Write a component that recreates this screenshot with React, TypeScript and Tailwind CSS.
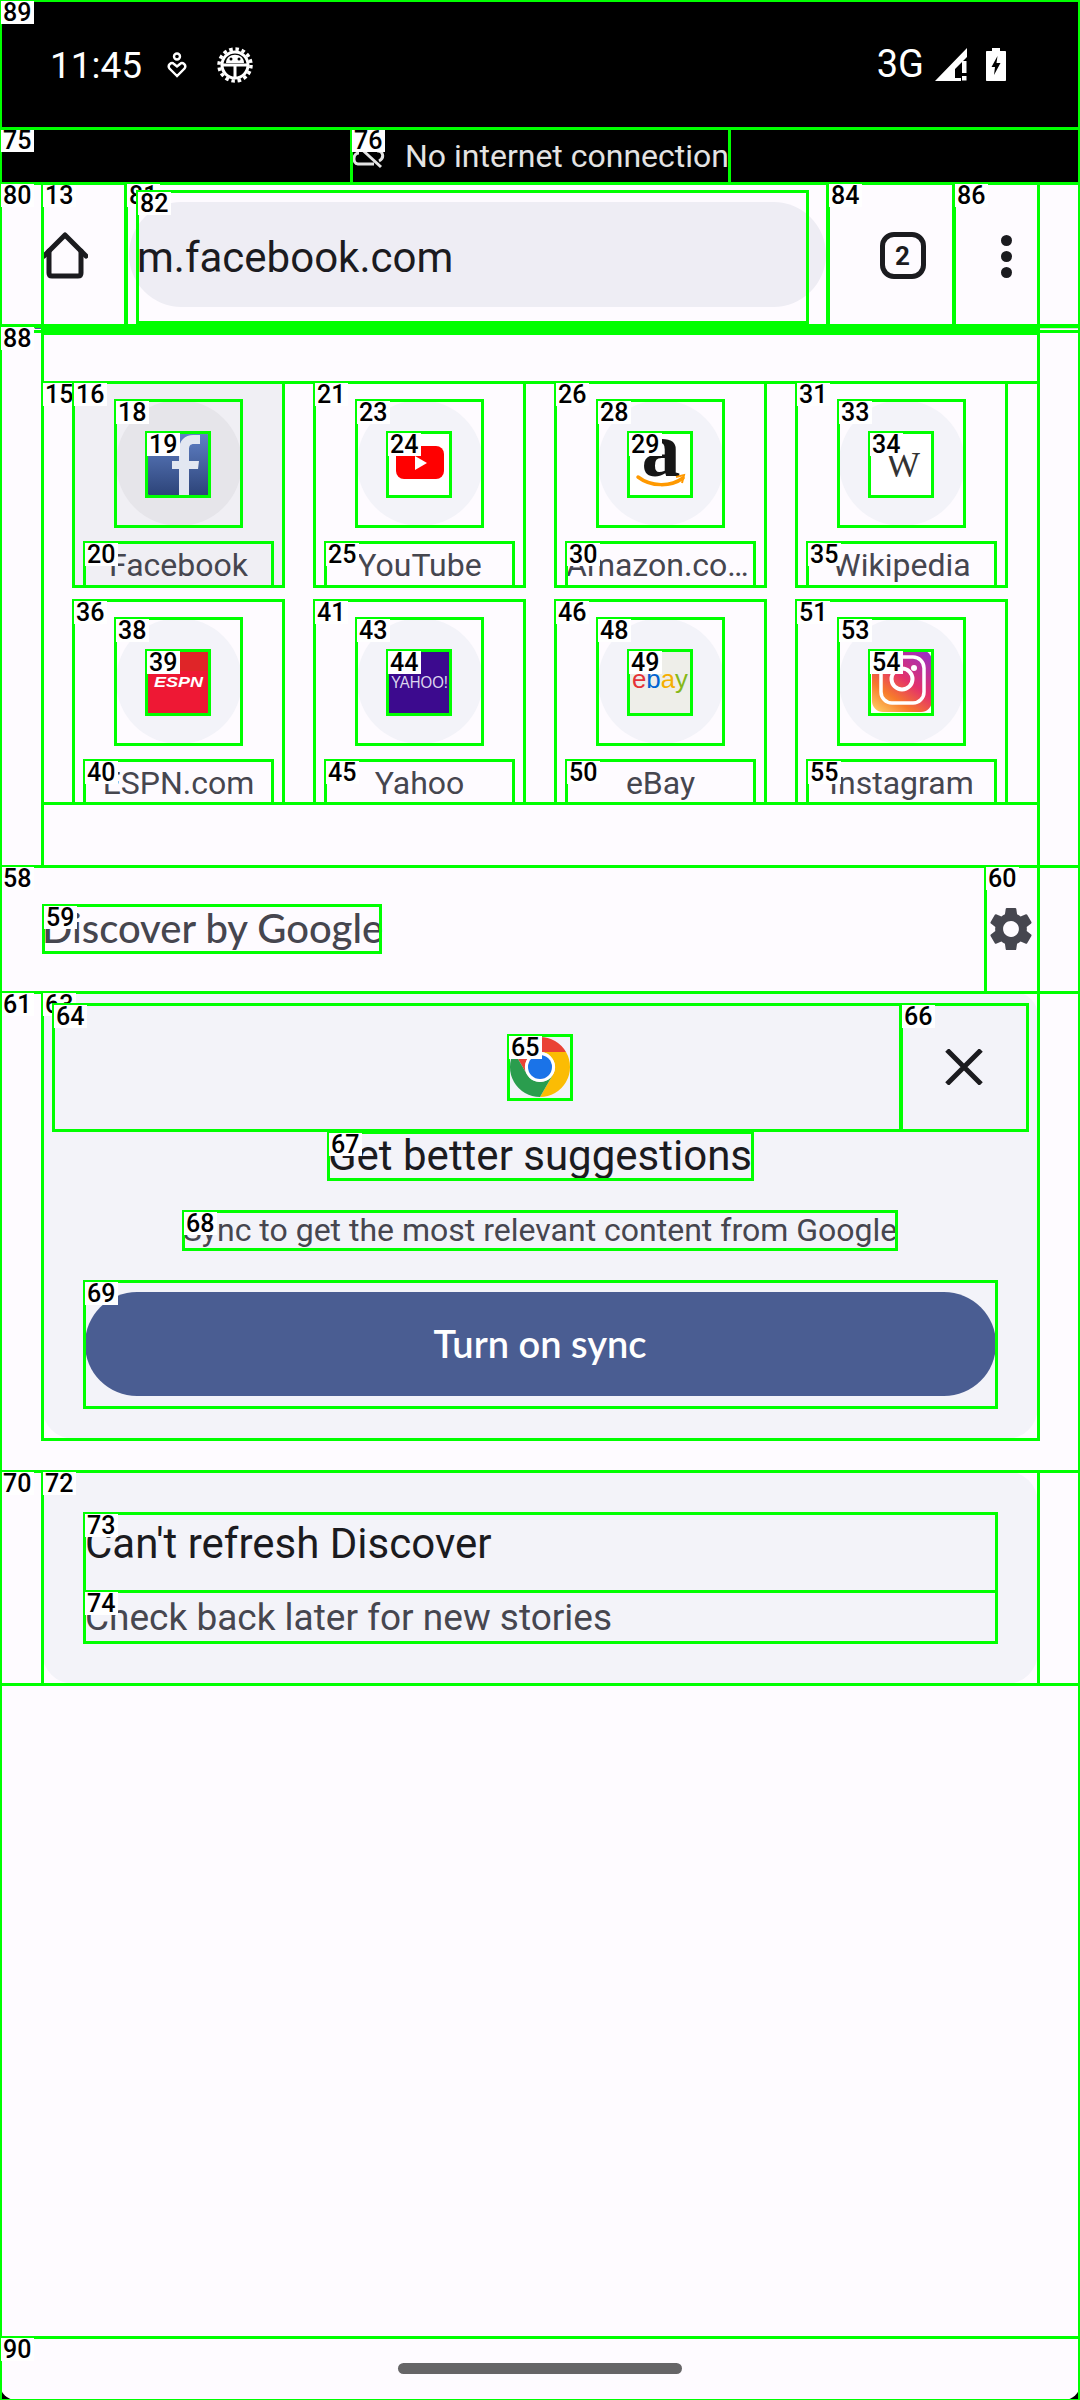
import React from 'react';

type Box = { id: number; x: number; y: number; x2: number; y2: number; label?: boolean };

const sites = [
    { name: 'Facebook', logo: 'facebook' },
    { name: 'YouTube', logo: 'youtube' },
    { name: 'Amazon.com', logo: 'amazon' },
    { name: 'Wikipedia', logo: 'wikipedia' },
    { name: 'ESPN.com', logo: 'espn' },
    { name: 'Yahoo', logo: 'yahoo' },
    { name: 'eBay', logo: 'ebay' },
    { name: 'Instagram', logo: 'instagram' },
];

const Logo = ({ name }: { name: string }) => {
    if (name === 'facebook') {
        return (
            <svg width="64" height="64" viewBox="0 0 64 64">
                <defs>
                    <linearGradient id="fb" x1="0" y1="0" x2="0" y2="1">
                        <stop offset="0" stopColor="#6283c9" />
                        <stop offset="1" stopColor="#2d4479" />
                    </linearGradient>
                </defs>
                <rect width="64" height="64" rx="2" fill="url(#fb)" />
                <path d="M32 64V38H25V30H32V20C32 9 38 4 46 4H53V13H47C43 13 42 15 42 19V30H52L51 38H42V64Z" fill="#e2e7f1" />
            </svg>
        );
    }
    if (name === 'youtube') {
        return (
            <svg width="64" height="64" viewBox="0 0 64 64">
                <rect width="64" height="64" fill="#fff" />
                <rect x="8" y="15" width="48" height="33" rx="8" fill="#f00" />
                <path d="M27 25L39 32L27 39Z" fill="#fff" />
            </svg>
        );
    }
    if (name === 'amazon') {
        return (
            <svg width="64" height="64" viewBox="0 0 64 64">
                <rect width="64" height="64" fill="#fff" />
                <text x="32" y="45" textAnchor="middle" fontFamily="Liberation Serif" fontWeight="700" fontSize="78" fill="#161616">a</text>
                <path d="M9 46C22 56 42 56 54 47" fill="none" stroke="#f90" strokeWidth="3.5" strokeLinecap="round" />
                <path d="M47 46L55 44L53 52" fill="none" stroke="#f90" strokeWidth="2" />
            </svg>
        );
    }
    if (name === 'wikipedia') {
        return (
            <svg width="64" height="64" viewBox="0 0 64 64">
                <rect width="64" height="64" fill="#fff" />
                <text x="33" y="46" textAnchor="middle" fontFamily="Liberation Serif" fontSize="36" fill="#333">W</text>
            </svg>
        );
    }
    if (name === 'espn') {
        return (
            <svg width="64" height="64" viewBox="0 0 64 64">
                <rect width="64" height="64" fill="#ee1834" />
                <rect width="64" height="22" fill="#df2528" />
                <text x="7" y="38" fontFamily="Liberation Sans" fontWeight="700" fontStyle="italic" fontSize="15" textLength="49" lengthAdjust="spacingAndGlyphs" fill="#fff">ESPN</text>
            </svg>
        );
    }
    if (name === 'yahoo') {
        return (
            <svg width="64" height="64" viewBox="0 0 64 64">
                <rect width="64" height="64" fill="#3c0a8e" />
                <text x="3" y="39" fontFamily="Liberation Sans" fontSize="16" textLength="57" lengthAdjust="spacingAndGlyphs" fill="#ddd6ef">YAHOO!</text>
            </svg>
        );
    }
    if (name === 'ebay') {
        return (
            <svg width="64" height="64" viewBox="0 0 64 64">
                <rect width="64" height="64" fill="#eeeee9" />
                <text x="3" y="39" fontFamily="Liberation Sans" fontSize="26" textLength="56" lengthAdjust="spacingAndGlyphs">
                    <tspan fill="#e53238">e</tspan>
                    <tspan fill="#0064d2">b</tspan>
                    <tspan fill="#f5af02">a</tspan>
                    <tspan fill="#86b817">y</tspan>
                </text>
            </svg>
        );
    }
    return (
        <svg width="64" height="64" viewBox="0 0 64 64">
            <defs>
                <linearGradient id="ig" x1="0.15" y1="1" x2="0.85" y2="0">
                    <stop offset="0" stopColor="#fdc35c" />
                    <stop offset="0.25" stopColor="#f77a2c" />
                    <stop offset="0.55" stopColor="#e3316b" />
                    <stop offset="1" stopColor="#9b30c4" />
                </linearGradient>
            </defs>
            <rect width="64" height="64" fill="#fff" />
            <rect x="2" y="1" width="60" height="62" rx="11" fill="url(#ig)" />
            <rect x="11" y="8" width="43" height="46" rx="11" fill="none" stroke="#fff" strokeWidth="3.5" />
            <circle cx="32" cy="30" r="10.5" fill="none" stroke="#fff" strokeWidth="4" />
            <circle cx="44" cy="19" r="3" fill="#fff" />
        </svg>
    );
};

const tileBoxes: Box[] = [0, 1].flatMap((row) =>
    [0, 1, 2, 3].flatMap((col) => {
        const id = 16 + (row * 4 + col) * 5;
        const x = 73 + col * 241;
        const y = row === 0 ? 382 : 600;
        const bottom = row === 0 ? 586 : 803;
        return [
            { id, x, y, x2: x + 211, y2: bottom, label: true },
            { id: id + 2, x: x + 42, y: y + 18, x2: x + 169, y2: y + 144, label: true },
            { id: id + 3, x: x + 73, y: y + 50, x2: x + 137, y2: y + 114, label: true },
            { id: id + 4, x: x + 11, y: y + 160, x2: x + 200, y2: bottom, label: true },
        ];
    })
);

const boxes: Box[] = [
    { id: 1, x: 0, y: 331, x2: 1080, y2: 2337 },
    { id: 2, x: 42, y: 333, x2: 1039, y2: 866 },
    { id: 13, x: 42, y: 183, x2: 126, y2: 328, label: true },
    { id: 15, x: 42, y: 382, x2: 1039, y2: 803, label: true },
    ...tileBoxes,
    { id: 58, x: 0, y: 866, x2: 1080, y2: 992, label: true },
    { id: 59, x: 43, y: 905, x2: 381, y2: 952, label: true },
    { id: 60, x: 985, y: 866, x2: 1039, y2: 992, label: true },
    { id: 61, x: 0, y: 992, x2: 1080, y2: 1471, label: true },
    { id: 63, x: 42, y: 992, x2: 1039, y2: 1439, label: true },
    { id: 64, x: 53, y: 1004, x2: 901, y2: 1130, label: true },
    { id: 65, x: 508, y: 1035, x2: 572, y2: 1099, label: true },
    { id: 66, x: 901, y: 1004, x2: 1028, y2: 1130, label: true },
    { id: 67, x: 328, y: 1132, x2: 753, y2: 1179, label: true },
    { id: 68, x: 183, y: 1211, x2: 897, y2: 1249, label: true },
    { id: 69, x: 84, y: 1281, x2: 997, y2: 1407, label: true },
    { id: 70, x: 0, y: 1471, x2: 1080, y2: 1684, label: true },
    { id: 72, x: 42, y: 1471, x2: 1039, y2: 1684, label: true },
    { id: 73, x: 84, y: 1513, x2: 997, y2: 1591, label: true },
    { id: 74, x: 84, y: 1591, x2: 997, y2: 1642, label: true },
    { id: 75, x: 0, y: 128, x2: 1080, y2: 183, label: true },
    { id: 76, x: 351, y: 128, x2: 730, y2: 183, label: true },
    { id: 80, x: 0, y: 183, x2: 1080, y2: 325, label: true },
    { id: 81, x: 126, y: 183, x2: 828, y2: 328, label: true },
    { id: 82, x: 137, y: 191, x2: 808, y2: 322, label: true },
    { id: 84, x: 828, y: 183, x2: 954, y2: 328, label: true },
    { id: 86, x: 954, y: 183, x2: 1039, y2: 328, label: true },
    { id: 88, x: 0, y: 326, x2: 1080, y2: 2337, label: true },
    { id: 89, x: 0, y: 0, x2: 1080, y2: 128, label: true },
    { id: 90, x: 0, y: 2337, x2: 1080, y2: 2400, label: true },
];

const StatusBar = () => (
    <div className="h-[128px] flex items-center pl-[50px] pr-[74px] text-white">
        <span className="text-[37px] leading-none w-[117px] mt-[3px]">11:45</span>
        <svg width="20" height="26" viewBox="0 0 20 26" fill="none" stroke="#fff" strokeWidth="2.4" className="mt-[2px]">
            <circle cx="10" cy="4.5" r="3" />
            <path d="M10 24L2.5 16.5C0 13 4.5 9.5 7 12L10 14.5L13 12C15.5 9.5 20 13 17.5 16.5Z" />
        </svg>
        <svg className="ml-[30px] mt-[2px]" width="36" height="36" viewBox="0 0 36 36" fill="none">
            <circle cx="18" cy="18" r="16" stroke="#fff" strokeWidth="3.5" strokeDasharray="3.5 2.78" />
            <circle cx="18" cy="18" r="13" stroke="#fff" strokeWidth="3" />
            <path d="M6 18H30M18 18V31" stroke="#fff" strokeWidth="3" />
            <path d="M9 16C9 5 27 5 27 16Z" fill="#fff" />
            <circle cx="14" cy="12" r="1.5" fill="#000" />
            <circle cx="22" cy="12" r="1.5" fill="#000" />
        </svg>
        <span className="ml-auto text-[38px] leading-none mr-[-1px]">3G</span>
        <svg className="ml-[12px]" width="32" height="33" viewBox="0 0 32 33">
            <path d="M0 33L32 0V9L20 21V30H26V33Z" fill="#fff" />
            <rect x="27" y="13" width="4.5" height="12" fill="#fff" />
            <rect x="27" y="28" width="4.5" height="4.5" fill="#fff" />
        </svg>
        <svg className="ml-[19px]" width="20" height="33" viewBox="0 0 20 33">
            <path d="M6 0H14V3H19C19.6 3 20 3.4 20 4V32C20 32.6 19.6 33 19 33H1C0.4 33 0 32.6 0 32V4C0 3.4 0.4 3 1 3H6Z" fill="#fff" />
            <path d="M11.5 8L5.5 19H9L8 27L14.5 15H10.5Z" fill="#000" />
        </svg>
    </div>
);

const Toolbar = () => (
    <div className="h-[144px] flex text-[#1b1b1f]">
        <div className="w-[42px]" />
        <div className="w-[84px] flex items-center pt-[1px]">
            <svg width="46" height="47" viewBox="0 0 46 47" fill="none" stroke="#1b1b1f" strokeWidth="5" strokeLinejoin="round" strokeLinecap="round">
                <path d="M2 24L23 3L44 24" />
                <path d="M7 19V41C7 43 8 44 10 44H36C38 44 39 43 39 41V19" />
            </svg>
        </div>
        <div className="w-[702px] flex items-center pl-[3px] pb-[1px]">
            <div className="w-[697px] h-[105px] rounded-full bg-[#eeedf4] flex items-center pl-[8px] pt-[6px]">
                <span className="text-[42px] leading-none">m.facebook.com</span>
            </div>
        </div>
        <div className="w-[126px] flex items-center justify-center pl-[23px] pt-[1px]">
            <div className="w-[46px] h-[47px] border-[5px] border-[#1b1b1f] rounded-[14px] flex items-center justify-center text-[26px] font-bold leading-none">2</div>
        </div>
        <div className="w-[84px] flex flex-col items-center justify-center gap-[5px] pt-[2px] pl-[20px]">
            <div className="w-[11px] h-[11px] rounded-full bg-[#1b1b1f]" />
            <div className="w-[11px] h-[11px] rounded-full bg-[#1b1b1f]" />
            <div className="w-[11px] h-[11px] rounded-full bg-[#1b1b1f]" />
        </div>
    </div>
);

const TopSites = () => (
    <div className="h-[537px] mx-[42px] pt-[53px]">
        <div className="grid grid-cols-4 gap-x-[30px] gap-y-[14px] pl-[31px] pr-[31px]">
            {sites.map((site, i) => (
                <div key={site.name} className={`h-[204px] flex flex-col items-center pt-[18px] ${i === 0 ? 'bg-[#f0eff4] rounded-[4px]' : ''}`}>
                    <div className={`w-[126px] h-[126px] rounded-full flex items-center justify-center ${i === 0 ? 'bg-[#e6e5ea]' : 'bg-[#f3f3f9]'}`}>
                        <Logo name={site.logo} />
                    </div>
                    <div className="w-[189px] mt-[17px] h-[43px] text-[32px] leading-[44px] text-center text-[#46464f] truncate">{site.name}</div>
                </div>
            ))}
        </div>
    </div>
);

const Chrome = () => (
    <svg width="64" height="64" viewBox="0 0 64 64">
        <path d="M6 17A30 30 0 0 1 58 17H32A15 15 0 0 0 19 39.5Z" fill="#ea4335" />
        <path d="M32 17H58A30 30 0 0 1 32 62L45 39.5A15 15 0 0 0 32 17Z" fill="#fbbc04" />
        <path d="M6 17L19 39.5A15 15 0 0 0 45 39.5L32 62A30 30 0 0 1 6 17Z" fill="#2a9d4e" />
        <circle cx="32" cy="32" r="15" fill="#fff" />
        <circle cx="32" cy="32" r="12" fill="#1a73e8" />
    </svg>
);

const App = () => {
    return (
        <div className="relative w-[1080px] h-[2400px] overflow-hidden bg-black font-['Roboto',sans-serif]">
            <StatusBar />
            <div className="h-[55px] flex items-center justify-center text-[#e3e3e3] pt-[1px]">
                <div className="w-[378px] flex items-center justify-between">
                    <svg width="34" height="30" viewBox="0 0 34 30" fill="none" stroke="#e3e3e3" strokeWidth="3">
                        <path d="M6 4L30 26M8 12C2 12 1 22 7 23H23M28 20C34 17 32 9 26 10" />
                    </svg>
                    <span className="text-[32px] leading-none whitespace-nowrap">No internet connection</span>
                </div>
            </div>
            <div className="h-[2217px] flex flex-col bg-[#fefbff] rounded-b-[16px]">
                <Toolbar />
                <div className="h-[2px] flex bg-[#d9d9dc]">
                    <div className="w-[35px]" />
                    <div className="w-[19px] bg-[#4a5d92]" />
                </div>
                <TopSites />
                <div className="h-[126px] px-[42px] flex items-center justify-between">
                    <span className="text-[40px] leading-none font-['Lato',sans-serif] font-medium text-[#46464f] pb-[3px]">Discover by Google</span>
                    <svg width="42" height="44" viewBox="2.5 2 19 20" fill="#46464f" className="mr-[6px]">
                        <path d="M19.14 12.94c.04-.3.06-.61.06-.94 0-.32-.02-.64-.07-.94l2.03-1.58c.18-.14.23-.41.12-.61l-1.92-3.32c-.12-.22-.37-.29-.59-.22l-2.39.96c-.5-.38-1.03-.7-1.62-.94l-.36-2.54c-.04-.24-.24-.41-.48-.41h-3.84c-.24 0-.43.17-.47.41l-.36 2.54c-.59.24-1.13.57-1.62.94l-2.39-.96c-.22-.08-.47 0-.59.22L2.74 8.87c-.12.21-.08.47.12.61l2.03 1.58c-.05.3-.09.63-.09.94s.02.64.07.94l-2.03 1.58c-.18.14-.23.41-.12.61l1.92 3.32c.12.22.37.29.59.22l2.39-.96c.5.38 1.03.7 1.62.94l.36 2.54c.05.24.24.41.48.41h3.84c.24 0 .44-.17.47-.41l.36-2.54c.59-.24 1.13-.56 1.62-.94l2.39.96c.22.08.47 0 .59-.22l1.92-3.32c.12-.22.07-.47-.12-.61l-2.01-1.58zM12 15.6c-1.98 0-3.6-1.62-3.6-3.6s1.62-3.6 3.6-3.6 3.6 1.62 3.6 3.6-1.62 3.6-3.6 3.6z" />
                    </svg>
                </div>
                <div className="mx-[42px] h-[447px] rounded-t-[24px] rounded-b-[32px] bg-[#f3f3f9] flex flex-col items-center pt-[12px]">
                    <div className="w-[973px] h-[126px] flex">
                        <div className="flex-1 flex items-center justify-center pl-[126px]">
                            <Chrome />
                        </div>
                        <div className="w-[126px] flex items-center justify-center">
                            <svg width="38" height="36" viewBox="0 0 38 36" stroke="#1b1b1f" strokeWidth="5">
                                <path d="M2 1L36 35M36 1L2 35" />
                            </svg>
                        </div>
                    </div>
                    <div className="mt-[2px] h-[47px] text-[42px] leading-[47px] text-[#1b1b1f] whitespace-nowrap">Get better suggestions</div>
                    <div className="mt-[32px] h-[38px] text-[32px] leading-[38px] text-[#46464f] whitespace-nowrap">Sync to get the most relevant content from Google</div>
                    <div className="mt-[43px] w-[911px] h-[104px] rounded-full bg-[#4a5d92] flex items-center justify-center pb-[2px] text-white text-[38px] font-semibold font-['Lato',sans-serif]">Turn on sync</div>
                </div>
                <div className="mt-[32px] mx-[42px] h-[213px] rounded-[32px] bg-[#f3f3f9] pt-[45px] px-[43px]">
                    <div className="h-[75px] text-[42px] leading-[56px] text-[#1b1b1f]">Can't refresh Discover</div>
                    <div className="h-[51px] text-[37px] leading-[50px] text-[#46464f] pt-[2px]">Check back later for new stories</div>
                </div>
                <div className="mt-auto h-[63px] flex items-center justify-center">
                    <div className="w-[284px] h-[11px] rounded-full bg-[#666567]" />
                </div>
            </div>
            <div className="absolute inset-0 pointer-events-none">
                {boxes.map((b) => (
                    <React.Fragment key={b.id}>
                        <div
                            className="absolute border-[3px] border-[#00ff00]"
                            style={{ left: b.x - 1, top: b.y - 1, width: b.x2 - b.x + 2, height: b.y2 - b.y + 3 }}
                        />
                        {b.label && (
                            <div
                                className="absolute w-[33px] h-[23px] bg-white text-black text-[25px] leading-[24px] font-medium pl-[2px] font-['Roboto',sans-serif]"
                                style={{ left: b.x + 1, top: b.y + 1 }}
                            >
                                {b.id}
                            </div>
                        )}
                    </React.Fragment>
                ))}
            </div>
        </div>
    );
};

export default App;
